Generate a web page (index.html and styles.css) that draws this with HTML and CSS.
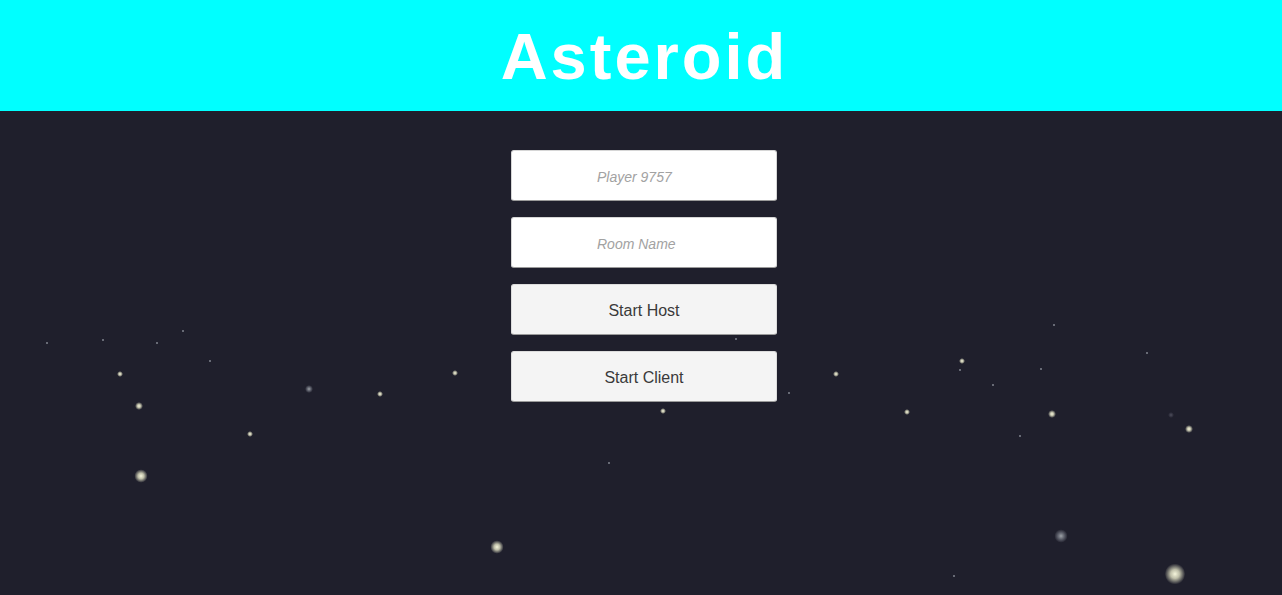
FILE: index.html
```html
<!DOCTYPE html>
<html lang="en">
<head>
<meta charset="utf-8">
<title>Asteroid</title>
<link rel="stylesheet" href="styles.css">
</head>
<body>
<header class="topbar"><h1 class="title">Asteroid</h1></header>
<main class="sky">
  <div class="stars" aria-hidden="true">
    <span class="star tiny" style="left:47px;top:343px"></span>
    <span class="star tiny" style="left:103px;top:340px"></span>
    <span class="star tiny" style="left:157px;top:343px"></span>
    <span class="star tiny" style="left:183px;top:331px"></span>
    <span class="star sm" style="left:120px;top:374px"></span>
    <span class="star tiny" style="left:210px;top:361px"></span>
    <span class="star md" style="left:139px;top:406px"></span>
    <span class="star sm" style="left:250px;top:434px"></span>
    <span class="star lg" style="left:141px;top:476px"></span>
    <span class="star md dim" style="left:309px;top:389px"></span>
    <span class="star sm" style="left:380px;top:394px"></span>
    <span class="star sm" style="left:455px;top:373px"></span>
    <span class="star lg" style="left:497px;top:547px"></span>
    <span class="star tiny" style="left:609px;top:463px"></span>
    <span class="star sm" style="left:663px;top:411px"></span>
    <span class="star tiny" style="left:736px;top:339px"></span>
    <span class="star tiny" style="left:789px;top:393px"></span>
    <span class="star sm" style="left:836px;top:374px"></span>
    <span class="star sm" style="left:907px;top:412px"></span>
    <span class="star sm" style="left:962px;top:361px"></span>
    <span class="star tiny" style="left:960px;top:370px"></span>
    <span class="star tiny" style="left:993px;top:385px"></span>
    <span class="star tiny" style="left:1020px;top:436px"></span>
    <span class="star tiny" style="left:1041px;top:369px"></span>
    <span class="star md" style="left:1052px;top:414px"></span>
    <span class="star tiny" style="left:1054px;top:325px"></span>
    <span class="star tiny" style="left:1147px;top:353px"></span>
    <span class="star sm faint" style="left:1171px;top:415px"></span>
    <span class="star md" style="left:1189px;top:429px"></span>
    <span class="star lg dim" style="left:1061px;top:536px"></span>
    <span class="star tiny" style="left:954px;top:576px"></span>
    <span class="star xl" style="left:1175px;top:574px"></span>
  </div>
  <form class="menu">
    <input class="field" type="text" placeholder="Player 9757">
    <input class="field" type="text" placeholder="Room Name">
    <button class="btn" type="button">Start Host</button>
    <button class="btn" type="button">Start Client</button>
  </form>
</main>
</body>
</html>
```
FILE: styles.css
```css
html, body {
  margin: 0;
  padding: 0;
  height: 100%;
  overflow: hidden;
}
body {
  font-family: "Liberation Sans", Arial, sans-serif;
  background: #1f1f2c;
}
.topbar {
  height: 111px;
  background: #00ffff;
  display: flex;
  align-items: center;
  justify-content: center;
}
.title {
  margin: 0;
  color: #ffffff;
  font-size: 65px;
  font-weight: 700;
  letter-spacing: 3px;
  line-height: 1;
  padding-left: 7px;
  transform: translateY(1px);
}
.sky {
  position: relative;
  height: 484px;
  background: #1f1f2c;
}
.stars {
  position: absolute;
  inset: 0;
  top: -111px;
  pointer-events: none;
}
.star {
  position: absolute;
  border-radius: 50%;
  transform: translate(-50%, -50%);
  background: radial-gradient(circle, rgba(245,245,220,1) 0%, rgba(230,230,200,0.8) 30%, rgba(200,200,180,0) 70%);
}
.star.tiny {
  width: 2px;
  height: 2px;
  background: rgba(170,175,185,0.7);
}
.star.sm { width: 6px; height: 6px; }
.star.md { width: 8px; height: 8px; }
.star.lg { width: 13px; height: 14px; }
.star.xl { width: 20px; height: 22px; }
.star.dim {
  background: radial-gradient(circle, rgba(170,175,180,0.9) 0%, rgba(150,155,165,0.5) 35%, rgba(120,125,140,0) 70%);
}
.star.faint {
  background: radial-gradient(circle, rgba(90,90,105,0.8) 0%, rgba(60,60,75,0) 70%);
}
.menu {
  position: relative;
  display: flex;
  flex-direction: column;
  align-items: center;
  gap: 16px;
  padding: 39px 0 0 6px;
  margin: 0;
}
.field, .btn {
  box-sizing: border-box;
  width: 266px;
  height: 51px;
  border-radius: 3px;
  margin: 0;
  font-family: "Liberation Sans", Arial, sans-serif;
  outline: none;
}
.field {
  background: #ffffff;
  border: 1px solid #d6d6d6;
  border-bottom-color: #9a9a9a;
  padding: 3px 0 0 85px;
  font-size: 14px;
  font-style: italic;
  color: #333;
  text-align: left;
}
.field::placeholder {
  color: #a2a2a2;
  font-style: italic;
}
.btn {
  background: #f4f4f4;
  border: 1px solid #dcdcdc;
  border-bottom-color: #9a9a9a;
  font-size: 16px;
  color: #3a3a3a;
  padding: 2px 0 0;
  cursor: pointer;
}
```
